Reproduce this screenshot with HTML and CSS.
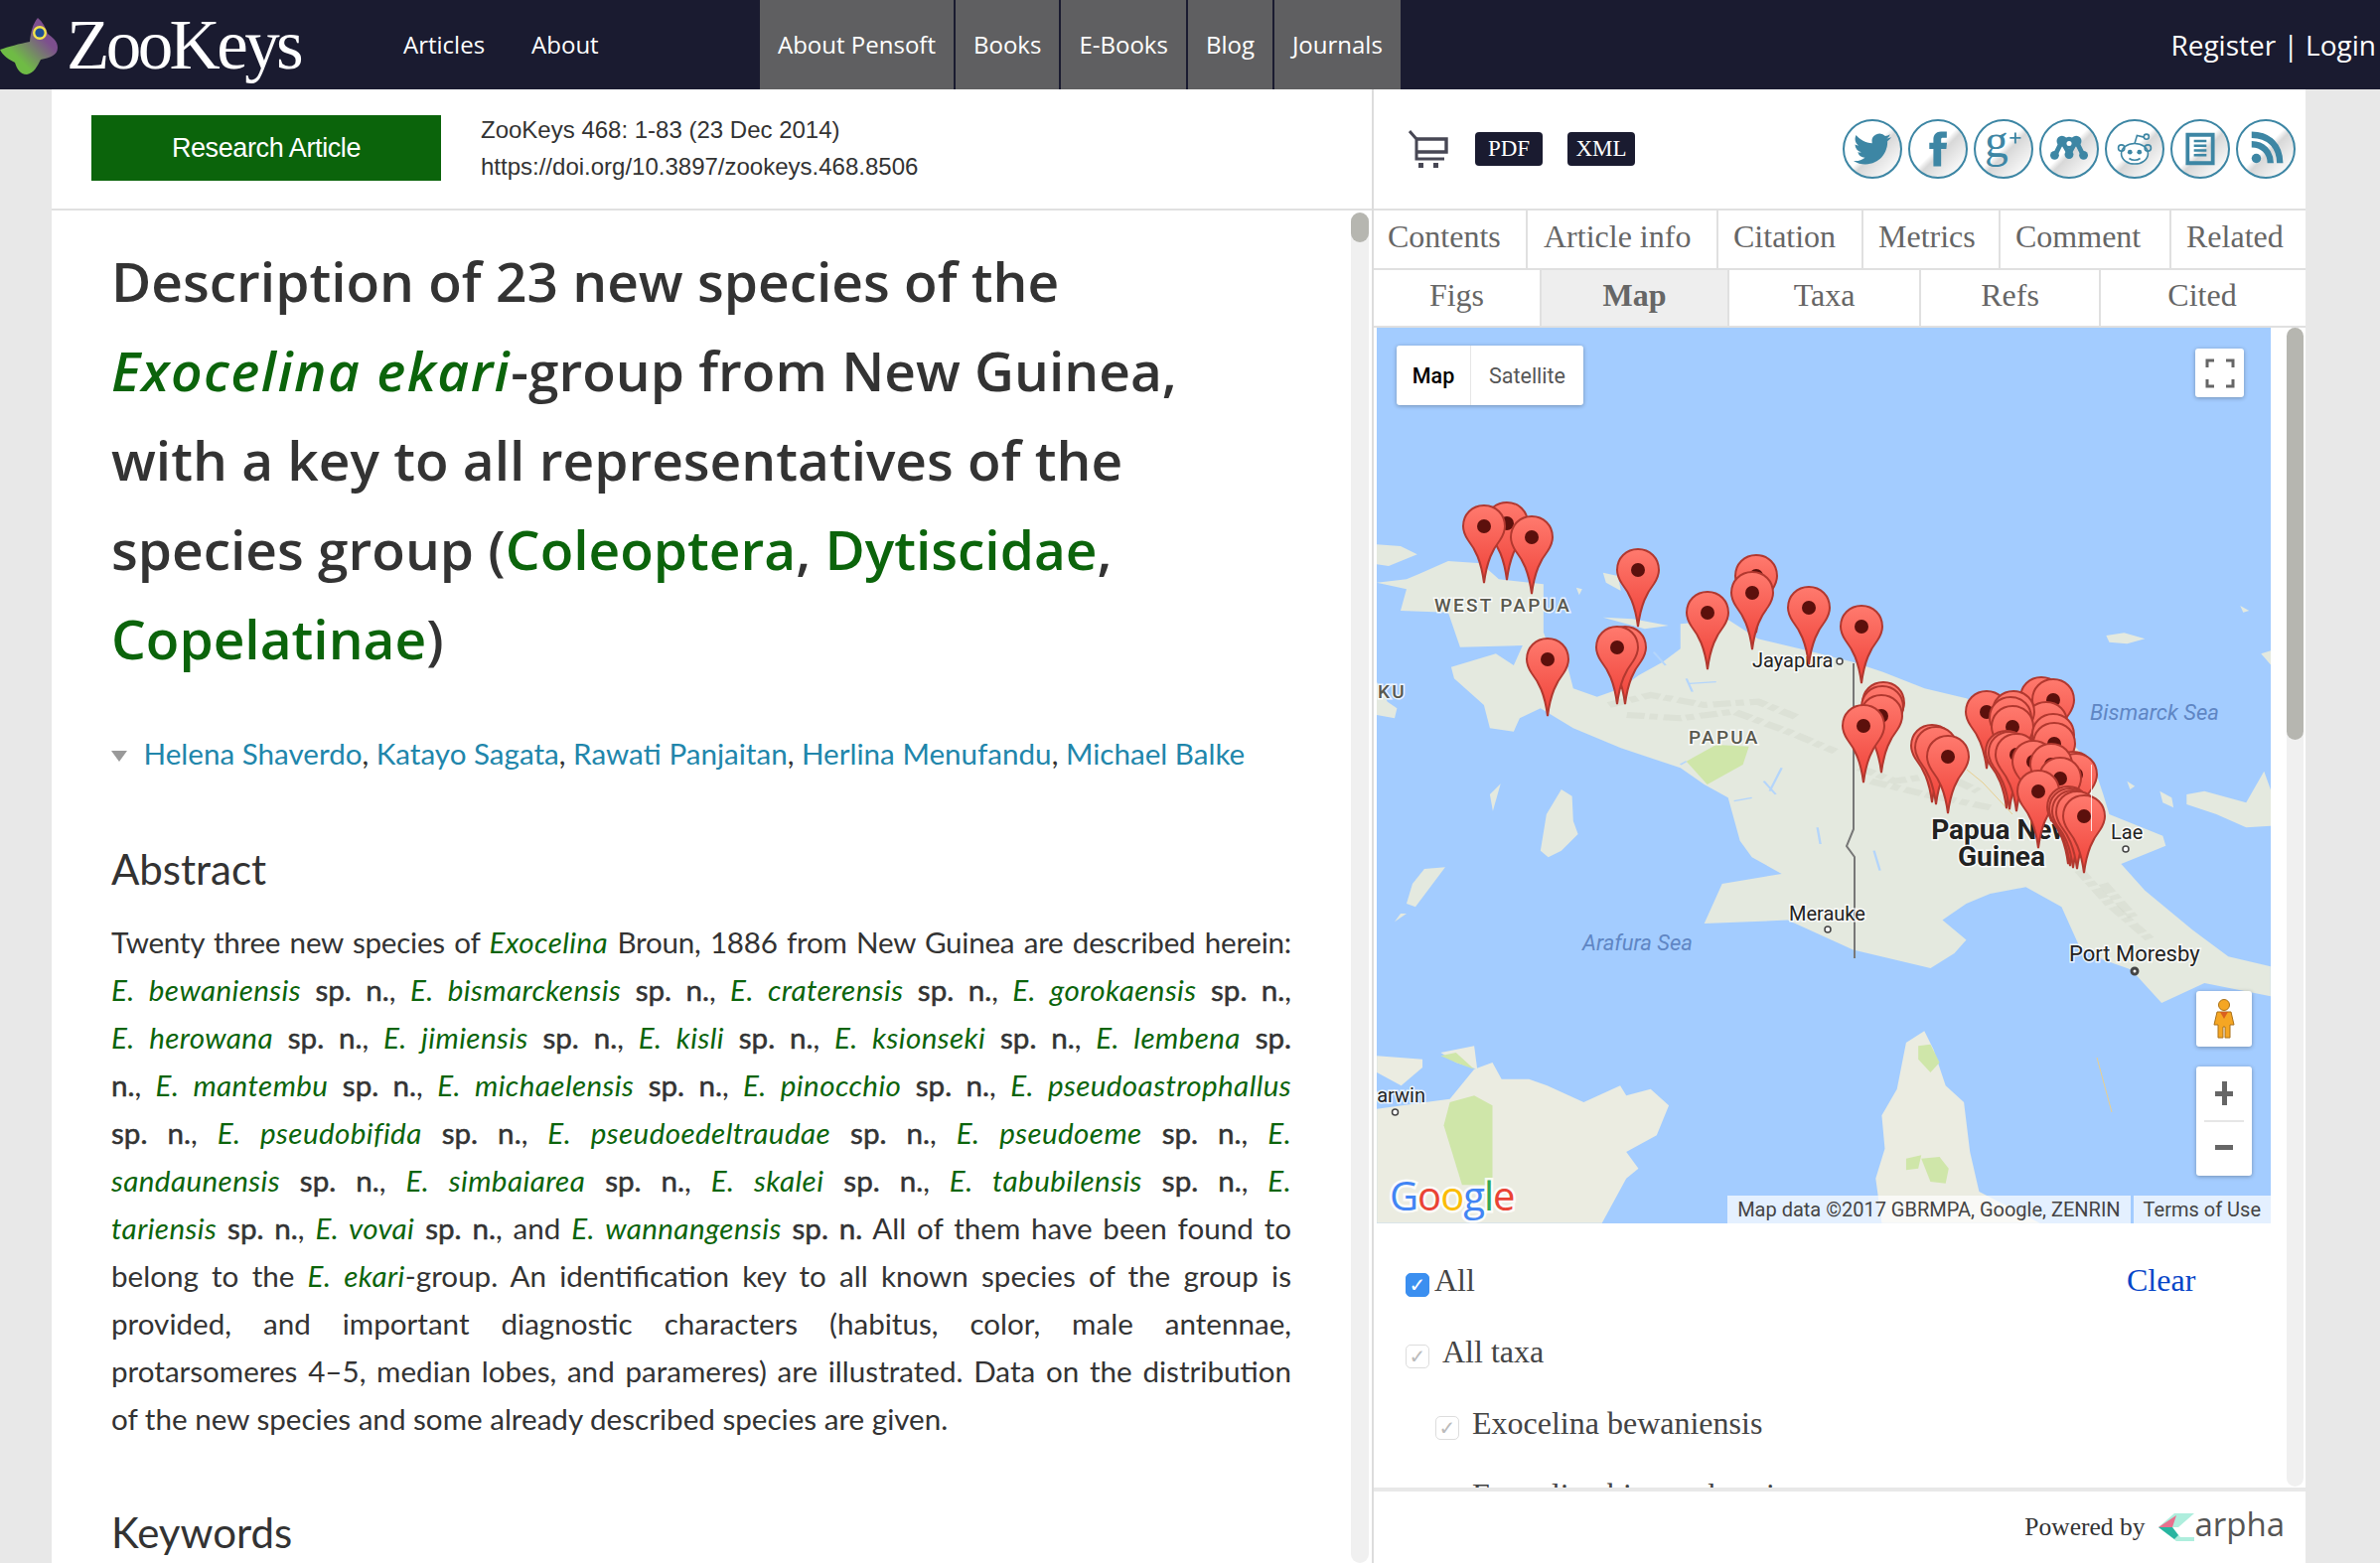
FILE: index.html
```html
<!DOCTYPE html>
<html>
<head>
<meta charset="UTF-8">
<title>ZooKeys - Description of 23 new species of the Exocelina ekari-group</title>
<link rel="stylesheet" href="styles.css">
</head>
<body>

<header class="topbar">
  <a class="logo">
    <svg class="logo-fly" viewBox="0 0 60 80">
      <defs>
        <linearGradient id="flyGrad" x1="0" y1="1" x2="1" y2="0">
          <stop offset="0.3" stop-color="#6fbb45"/>
          <stop offset="0.7" stop-color="#7d4f8e"/>
        </linearGradient>
      </defs>
      <path fill="url(#flyGrad)" d="M38 18C33 24 31 32 30 42C20 44 8 47 0 50C3 56 9 60 15 63C17 69 20 75 27 75C34 74 38 66 41 60C50 58 58 56 58 48C58 41 52 37 48 34C46 28 43 22 38 18Z"/>
      <circle cx="40" cy="33" r="7" fill="#f3e44a"/>
      <circle cx="40" cy="33" r="4.6" fill="#1f4f96"/>
    </svg>
    <span class="logo-text">ZooKeys</span>
  </a>
  <nav class="main-nav">
    <a>Articles</a>
    <a>About</a>
  </nav>
  <nav class="grey-nav">
    <a>About Pensoft</a>
    <a>Books</a>
    <a>E-Books</a>
    <a>Blog</a>
    <a>Journals</a>
  </nav>
  <div class="account"><a>Register</a> <span class="bar">|</span> <a>Login</a></div>
</header>

<main class="page">

  <section class="col-left">
    <div class="art-head">
      <div class="art-type">Research Article</div>
      <div class="art-meta">
        <div>ZooKeys 468: 1-83 (23 Dec 2014)</div>
        <div>https://doi.org/10.3897/zookeys.468.8506</div>
      </div>
    </div>
    <div class="art-scroll">
      <article class="art-text">
        <h1 class="title">Description of 23 new species of the<br>
          <a class="g"><em>Exocelina ekari</em></a>-group from New Guinea,<br>
          with a key to all representatives of the<br>
          species group (<a class="g">Coleoptera</a>, <a class="g">Dytiscidae</a>,<br>
          <a class="g">Copelatinae</a>)</h1>
        <div class="authors">
          <span class="tri"></span>
          <a>Helena Shaverdo</a>, <a>Katayo Sagata</a>, <a>Rawati Panjaitan</a>, <a>Herlina Menufandu</a>, <a>Michael Balke</a>
        </div>
        <h2 class="sub">Abstract</h2>
        <p class="abstract">
          <span class="ln ln-first">Twenty three new species of <a class="g"><em>Exocelina</em></a> Broun, 1886 from New Guinea are described herein:</span>
          <span class="ln"><a class="g"><em>E. bewaniensis</em></a> <b>sp. n.</b>, <a class="g"><em>E. bismarckensis</em></a> <b>sp. n.</b>, <a class="g"><em>E. craterensis</em></a> <b>sp. n.</b>, <a class="g"><em>E. gorokaensis</em></a> <b>sp. n.</b>,</span>
          <span class="ln"><a class="g"><em>E. herowana</em></a> <b>sp. n.</b>, <a class="g"><em>E. jimiensis</em></a> <b>sp. n.</b>, <a class="g"><em>E. kisli</em></a> <b>sp. n.</b>, <a class="g"><em>E. ksionseki</em></a> <b>sp. n.</b>, <a class="g"><em>E. lembena</em></a> <b>sp.</b></span>
          <span class="ln"><b>n.</b>, <a class="g"><em>E. mantembu</em></a> <b>sp. n.</b>, <a class="g"><em>E. michaelensis</em></a> <b>sp. n.</b>, <a class="g"><em>E. pinocchio</em></a> <b>sp. n.</b>, <a class="g"><em>E. pseudoastrophallus</em></a></span>
          <span class="ln"><b>sp. n.</b>, <a class="g"><em>E. pseudobifida</em></a> <b>sp. n.</b>, <a class="g"><em>E. pseudoedeltraudae</em></a> <b>sp. n.</b>, <a class="g"><em>E. pseudoeme</em></a> <b>sp. n.</b>, <a class="g"><em>E.</em></a></span>
          <span class="ln"><a class="g"><em>sandaunensis</em></a> <b>sp. n.</b>, <a class="g"><em>E. simbaiarea</em></a> <b>sp. n.</b>, <a class="g"><em>E. skalei</em></a> <b>sp. n.</b>, <a class="g"><em>E. tabubilensis</em></a> <b>sp. n.</b>, <a class="g"><em>E.</em></a></span>
          <span class="ln"><a class="g"><em>tariensis</em></a> <b>sp. n.</b>, <a class="g"><em>E. vovai</em></a> <b>sp. n.</b>, and <a class="g"><em>E. wannangensis</em></a> <b>sp. n.</b> All of them have been found to</span>
          <span class="ln">belong to the <a class="g"><em>E. ekari</em></a>-group. An identification key to all known species of the group is</span>
          <span class="ln">provided, and important diagnostic characters (habitus, color, male antennae,</span>
          <span class="ln">protarsomeres 4–5, median lobes, and parameres) are illustrated. Data on the distribution</span>
          <span class="ln-last">of the new species and some already described species are given.</span>
        </p>
        <h2 class="sub sub-kw">Keywords</h2>
      </article>
      <div class="track track-left"><div class="thumb"></div></div>
    </div>
  </section>

  <section class="col-right">
    <div class="tools">
      <svg class="cart" viewBox="0 0 42 38">
        <path d="M1 1L8 9V29H36" fill="none" stroke="#474754" stroke-width="3"/>
        <path d="M8 9H38V22H8" fill="none" stroke="#474754" stroke-width="3.4"/>
        <rect x="10" y="33" width="5" height="5" fill="#474754"/>
        <rect x="25" y="33" width="5" height="5" fill="#474754"/>
      </svg>
      <a class="dl">PDF</a>
      <a class="dl">XML</a>
      <div class="socials">
        <a class="soc"><svg viewBox="0 0 24 24"><path d="M23.95 4.57a10 10 0 0 1-2.82.77 4.96 4.96 0 0 0 2.16-2.72c-.95.55-2 .96-3.12 1.19a4.92 4.92 0 0 0-8.38 4.48C7.69 8.09 4.07 6.13 1.64 3.16a4.82 4.82 0 0 0-.66 2.47c0 1.71.87 3.21 2.19 4.1a4.9 4.9 0 0 1-2.23-.61v.06a4.92 4.92 0 0 0 3.95 4.83 5 5 0 0 1-2.21.08 4.94 4.94 0 0 0 4.6 3.42A9.87 9.87 0 0 1 0 19.54a14 14 0 0 0 7.56 2.21c9.05 0 14-7.5 14-13.98 0-.21 0-.42-.02-.63a9.94 9.94 0 0 0 2.46-2.55z"/></svg></a>
        <a class="soc"><svg viewBox="0 0 24 24"><path d="M14 8V6c0-.9.6-1.1 1-1.1h2.6V1H14c-4 0-4.9 3-4.9 4.9V8H6.5v4h2.6v11H14V12h3.3l.4-4z"/></svg></a>
        <a class="soc"><svg viewBox="0 0 24 24"><text class="gplus-g" x="0" y="17">g</text><path d="M16 5h7M19.5 1.5v7" stroke="#3d86a4" stroke-width="1.2" fill="none"/></svg></a>
        <a class="soc"><svg viewBox="0 0 24 24"><circle cx="12" cy="8" r="3.8"/><circle cx="7.5" cy="7" r="3.4"/><circle cx="16.5" cy="7" r="3.4"/><circle cx="12" cy="15.5" r="2.8"/><circle cx="2.8" cy="16" r="2.8"/><circle cx="21.2" cy="16" r="2.8"/><path d="M3 16L7.5 7L12 15L16.5 7L21 16" fill="none" stroke="#3d86a4" stroke-width="3"/><circle cx="12" cy="8.5" r="1.6" fill="#fff"/></svg></a>
        <a class="soc"><svg viewBox="0 0 24 24"><g fill="none" stroke="#3d86a4" stroke-width="1"><ellipse cx="12" cy="15" rx="8.5" ry="6.5" fill="#fff"/><circle cx="3.6" cy="11.4" r="2"/><circle cx="20.4" cy="11.4" r="2"/><path d="M12 8.5L13.5 3.5L18 4.5"/><circle cx="19.5" cy="4.2" r="1.6"/><path d="M8.5 18C10.5 19.5 13.5 19.5 15.5 18"/></g><circle cx="9" cy="14" r="1.5"/><circle cx="15" cy="14" r="1.5"/></svg></a>
        <a class="soc"><svg viewBox="0 0 24 24"><path d="M4 3H20V21H4Z" fill="none" stroke="#3d86a4" stroke-width="2.4"/><path d="M8 7H16M8 10H16M8 13H16M8 16H16" stroke="#3d86a4" stroke-width="1.6"/></svg></a>
        <a class="soc"><svg viewBox="0 0 24 24"><circle cx="6" cy="18" r="3"/><path d="M3 9C10 9 15 14 15 21M3 3C14 3 21 10 21 21" fill="none" stroke="#3d86a4" stroke-width="4"/></svg></a>
      </div>
    </div>

    <div class="tabs tabs-one">
      <a>Contents</a><a>Article info</a><a>Citation</a><a>Metrics</a><a>Comment</a><a>Related</a>
    </div>
    <div class="tabs tabs-two">
      <a>Figs</a><a class="on">Map</a><a>Taxa</a><a>Refs</a><a>Cited</a>
    </div>

    <div class="panel">
      <div class="panel-inner">
        <div class="map">
          <svg class="map-canvas" viewBox="0 0 900 902">
            <defs>
              <linearGradient id="pinGrad" x1="0" y1="0" x2="0" y2="1">
                <stop offset="0" stop-color="#ff7a6e"/>
                <stop offset="1" stop-color="#ef4138"/>
              </linearGradient>
              <g id="pin">
                <path d="M0 57C-3 34 -9 23 -16 14C-20 8 -21 4 -21 0C-21 -12 -12 -21 0 -21C12 -21 21 -12 21 0C21 4 20 8 16 14C9 23 3 34 0 57Z" fill="url(#pinGrad)" stroke="#b2382f" stroke-width="2"/>
                <circle r="7" fill="#5c100c"/>
              </g>
            </defs>

            <!-- land, traced in crop coordinates -->
            <g class="land" transform="translate(-6 150) scale(.5995 .3333)">
              <path d="M10 320L60 310L80 295L130 255L185 262L215 310L290 325L290 470L300 520L330 570L340 640L380 665L420 640L450 600L490 560L520 520L520 445L600 432L650 490L720 520L810 560L860 590L930 640L1000 670L1060 720L1120 760L1180 810L1215 880L1230 960L1240 1020L1330 1085L1335 1115L1260 1170L1300 1250L1380 1370L1440 1450L1511 1480L1511 1570L1400 1530L1328 1590L1277 1490L1230 1460L1190 1420L1160 1300L1100 1240L1040 1260L1000 1290L960 1340L1000 1400L980 1440L940 1485L810 1430L700 1340L560 1350L590 1230L690 1200L640 1150L620 1100L600 970L560 930L520 880L420 820L340 760L285 700L250 730L240 770L200 760L190 690L140 610L135 575L210 535L240 570L255 510L150 515L130 410L50 405L60 340Z"/>
              <path d="M10 205L50 210L78 235L30 270L10 265Z"/>
              <path d="M390 290L415 300L420 345L395 320Z"/>
              <path d="M390 425L440 430L500 450L460 460Z"/>
              <path d="M345 335L355 340L350 358Z"/>
              <path d="M1235 480L1265 472L1300 490L1270 505L1240 500Z"/>
              <path d="M1460 390L1475 405L1465 410Z"/>
              <path d="M1495 535L1512 525L1512 570Z"/>
              <path d="M1325 950L1345 970L1348 1000L1330 985Z"/>
              <path d="M1370 960L1400 950L1470 985L1500 890L1512 950L1512 1055L1470 1060L1420 1020L1370 990Z"/>
              <path d="M1270 920L1283 935L1275 945Z"/>
              <path d="M10 620L28 680L44 700L40 730L10 720Z"/>
              <path d="M320 945L338 965L340 1040L348 1080L320 1130L298 1150L285 1130L295 1020Z"/>
              <path d="M90 1185L125 1180L100 1240L75 1300L60 1290L70 1230Z"/>
              <path d="M205 1010L218 928L200 960Z"/>
              <path d="M50 1320L60 1320L40 1345Z"/>
            </g>
            <g class="ridge" transform="translate(-6 150) scale(.5995 .3333)">
              <path d="M400 690L470 660L560 690L650 680L720 730"/>
              <path d="M430 720L520 730L610 710L700 770L780 830"/>
              <path d="M820 880L880 920L960 900L1020 950"/>
              <path d="M840 920L930 960L1040 1000"/>
              <path d="M1190 1190L1240 1290L1310 1400"/>
              <path d="M1230 1230L1280 1330"/>
            </g>
            <g class="river" transform="translate(-6 150) scale(.5995 .3333)">
              <path d="M535 625L580 620M475 530L495 570M540 650L530 610M660 920L680 960M690 880L670 950M750 1060L755 1110M845 1130L855 1190M610 980L640 970M530 860L520 870"/>
            </g>
            <g class="park" transform="translate(-6 150) scale(.5995 .3333)">
              <path d="M530 860L580 810L635 815L625 870L565 930Z"/>
            </g>
            <g class="land-au" transform="translate(-6 630) scale(.6124 .3333)">
              <path d="M10 470L90 450L130 440L170 350L200 330L215 380L260 380L290 400L350 450L410 400L420 430L460 410L490 460L470 550L420 600L440 650L420 680L380 815L10 815Z"/>
              <path d="M10 310L85 320L85 345L50 400L10 360Z"/>
              <path d="M115 300L170 280L175 350L140 330Z"/>
              <path d="M880 270L910 235L925 290L945 400L975 450L985 600L1000 720L1100 815L840 815L830 680L845 590L840 490L865 410Z"/>
            </g>
            <g class="park" transform="translate(-6 630) scale(.6124 .3333)">
              <path d="M130 450L170 430L200 460L200 700L150 700L120 520Z"/>
              <path d="M115 310L140 300L170 350L140 330Z"/>
              <path d="M900 280L920 275L935 330L920 360L900 320Z"/>
              <path d="M880 620L905 610L900 650L880 655Z"/>
              <path d="M905 620L935 615L950 650L945 695L920 690Z"/>
            </g>

            <path class="border" d="M480 338V505L473 522L481 533V635"/>
            <path class="road" d="M594 445L610 458L640 490M725 735L740 790"/>

            <text class="lb-region" x="58" y="286">WEST PAPUA</text>
            <text class="lb-region" x="314" y="419">PAPUA</text>
            <text class="lb-region" x="30" y="373" text-anchor="end">MALUKU</text>
            <text class="lb-city" x="378" y="342">Jayapura</text>
            <circle class="dot" cx="466" cy="336" r="3"/>
            <text class="lb-city" x="415" y="597">Merauke</text>
            <circle class="dot" cx="454" cy="606" r="3"/>
            <text class="lb-city" x="739" y="515">Lae</text>
            <circle class="dot" cx="754" cy="525" r="3"/>
            <text class="lb-city lb-big" x="697" y="638">Port Moresby</text>
            <circle class="dot dot-big" cx="763" cy="648" r="3"/>
            <text class="lb-city" x="49" y="780" text-anchor="end">Darwin</text>
            <circle class="dot" cx="18.5" cy="790" r="3"/>
            <text class="lb-sea" x="718" y="395">Bismarck Sea</text>
            <text class="lb-sea" x="207" y="627">Arafura Sea</text>
            <text class="lb-country" x="629" y="515" text-anchor="middle">Papua New</text>
            <text class="lb-country" x="629" y="542" text-anchor="middle">Guinea</text>

            <!-- markers, back to front -->
            <use href="#pin" x="131" y="197"/><use href="#pin" x="108" y="200"/><use href="#pin" x="156" y="211"/>
            <use href="#pin" x="263" y="244"/><use href="#pin" x="382" y="250"/><use href="#pin" x="378" y="267"/>
            <use href="#pin" x="333" y="287"/><use href="#pin" x="435" y="282"/><use href="#pin" x="488" y="301"/>
            <use href="#pin" x="172" y="334"/><use href="#pin" x="250" y="322"/><use href="#pin" x="242" y="322"/>
            <use href="#pin" x="510" y="378"/><use href="#pin" x="509" y="382"/><use href="#pin" x="508" y="391"/><use href="#pin" x="490" y="401"/>
            <use href="#pin" x="559" y="421"/><use href="#pin" x="563" y="423"/><use href="#pin" x="575" y="432"/>
            <use href="#pin" x="669" y="373"/><use href="#pin" x="681" y="375"/><use href="#pin" x="614" y="387"/>
            <use href="#pin" x="674" y="398"/><use href="#pin" x="641" y="387"/><use href="#pin" x="638" y="393"/><use href="#pin" x="640" y="402"/><use href="#pin" x="681" y="410"/>
            <use href="#pin" x="682" y="419"/><use href="#pin" x="634" y="427"/><use href="#pin" x="637" y="428"/><use href="#pin" x="644" y="430"/>
            <use href="#pin" x="701" y="448"/><use href="#pin" x="704" y="450"/><use href="#pin" x="661" y="437"/><use href="#pin" x="679" y="440"/><use href="#pin" x="688" y="454"/>
            <use href="#pin" x="666" y="467"/>
            <use href="#pin" x="696" y="483"/><use href="#pin" x="698" y="485"/><use href="#pin" x="701" y="487"/><use href="#pin" x="705" y="488"/><use href="#pin" x="712" y="492"/>
            <path class="seam" d="M719.5 440V507"/>

            <text class="google" x="13" y="889"><tspan class="g-blue">G</tspan><tspan class="g-red">o</tspan><tspan class="g-yellow">o</tspan><tspan class="g-blue">g</tspan><tspan class="g-green">l</tspan><tspan class="g-red">e</tspan></text>
          </svg>

          <div class="map-type"><a class="on">Map</a><a>Satellite</a></div>
          <a class="map-btn map-full">
            <svg viewBox="0 0 30 30"><path d="M2 9V2H9M21 2H28V9M28 21V28H21M9 28H2V21" fill="none" stroke="#666" stroke-width="3"/></svg>
          </a>
          <a class="map-btn map-peg">
            <svg viewBox="0 0 24 40"><circle cx="12" cy="6" r="5.5" fill="#f5a623" stroke="#a9711a"/><path d="M5 13H19L22 26H18V39H13V28H11V39H6V26H2Z" fill="#f5a623" stroke="#a9711a"/><path d="M8 13H16L12 20Z" fill="#d9601f"/></svg>
          </a>
          <div class="map-btn map-zoom">
            <span class="z-plus"></span>
            <span class="z-line"></span>
            <span class="z-minus"></span>
          </div>
          <div class="map-attr"><span>Map data ©2017 GBRMPA, Google, ZENRIN</span><span>Terms of Use</span></div>
        </div>

        <div class="filter">
          <div class="f-row f-all"><span class="chk chk-on">✓</span><span class="f-label">All</span><a class="clear">Clear</a></div>
          <div class="f-row"><span class="chk">✓</span><span class="f-label f-gap">All taxa</span></div>
          <div class="f-row f-sub"><span class="chk">✓</span><span class="f-label f-gap">Exocelina bewaniensis</span></div>
          <div class="f-row f-sub"><span class="chk">✓</span><span class="f-label f-gap">Exocelina bismarckensis</span></div>
        </div>
      </div>
      <div class="track track-right"><div class="thumb"></div></div>
    </div>

    <div class="powered">
      <span>Powered by</span>
      <svg class="arpha-icon" viewBox="0 0 36 28">
        <path d="M36 0H16L0 14H20Z" fill="#aeeedd"/>
        <path d="M18 2L0 14H14Z" fill="#e8708e"/>
        <path d="M0 14L18 28H36V24H22L14 14Z" fill="#aeeedd"/>
        <path d="M0 14L14 14L20 22L16 26Z" fill="#27b5a0"/>
      </svg>
      <span class="arpha">arpha</span>
    </div>
  </section>
</main>

</body>
</html>
```

FILE: styles.css
```css
html, body {margin: 0; height: 100%;}
body {background: #e8e8e8; color: #333; font-family: "Lato", sans-serif; overflow: hidden; width: 2396px; height: 1574px;}
a {color: inherit; text-decoration: none;}

/* top bar */
.topbar {display: flex; height: 90px; background: #1a1b30; color: #fff; font-family: "Open Sans", sans-serif; font-size: 24px;}
.logo {display: flex; width: 406px; position: relative;}
.logo-fly {width: 60px; height: 80px; flex: none;}
.logo-text {font-family: "Liberation Serif", serif; font-size: 71px; letter-spacing: -3.6px; line-height: 90px; margin-left: 7px;}
.main-nav {display: flex; gap: 47px; width: 359px; line-height: 90px;}
.grey-nav {display: flex; gap: 2px; line-height: 90px;}
.grey-nav a {background: #5f5f61; padding: 0 18px;}
.account {margin-left: auto; padding-right: 4px; font-size: 28px; line-height: 90px;}

/* main frame */
.page {display: flex; width: 2269px; height: 1484px; margin-left: 52px; background: #fff;}
.col-left {display: flex; flex-direction: column; width: 1329px; flex: none;}
.col-right {display: flex; flex-direction: column; width: 940px; flex: none; border-left: 2px solid #dcdcdc; box-sizing: border-box;}

/* article head */
.art-head {display: flex; height: 122px; box-sizing: border-box; padding: 26px 0 0 40px; border-bottom: 2px solid #e0e0e0; flex: none;}
.art-type {width: 352px; height: 66px; background: #0b640b; color: #fff; font-family: "Liberation Sans", sans-serif; font-size: 27px; letter-spacing: -.4px; text-align: center; line-height: 66px;}
.art-meta {margin-left: 40px; font-family: "Liberation Sans", sans-serif; font-size: 24px; line-height: 36.5px; margin-top: -3px;}

/* article text */
.art-scroll {display: flex; flex: 1; min-height: 0;}
.art-text {width: 1188px; margin-left: 60px; flex: none; overflow: hidden;}
.title {margin: 0; padding-top: 26px; font-family: "Open Sans", sans-serif; font-size: 55px; font-weight: 600; line-height: 90px; color: #333;}
.title em {letter-spacing: 1.5px;}
.g {color: #0b640b;}
.authors {margin-top: 50px; font-size: 29.6px; line-height: 42px; color: #333;}
.authors a {color: #2186ab;}
.tri {display: inline-block; width: 0; height: 0; margin-right: 9px; border-left: 8px solid transparent; border-right: 8px solid transparent; border-top: 11px solid #999; vertical-align: 3px;}
.sub {margin: 0; font-size: 42px; font-weight: 400; color: #333; line-height: 60px;}
.authors + .sub {margin-top: 65px;}
.abstract {margin: 20px 0 0; font-size: 29.6px; line-height: 48px;}
.abstract b {font-weight: 400; -webkit-text-stroke: .5px #333;}
.abstract em {letter-spacing: .4px;}
.ln {display: block; text-align: justify; text-align-last: justify;}
.ln-first {letter-spacing: -.25px;}
.ln-last {display: block;}
.sub-kw {margin-top: 60px;}

/* scrollbars */
.track {background: #f0f0f0; border-radius: 10px; flex: none;}
.thumb {background: #b6b6b0; border-radius: 10px;}
.track-left {width: 18px; margin: 2px 0 0 60px;}
.track-left .thumb {height: 30px;}
.track-right {width: 17px; margin-left: 16px; height: 1167px;}
.track-right .thumb {height: 415px;}

/* right column */
.tools {display: flex; align-items: center; height: 122px; box-sizing: border-box; padding: 0 10px 0 35px; border-bottom: 2px solid #e0e0e0; flex: none;}
.cart {width: 42px; height: 38px;}
.dl {width: 68px; height: 34px; margin-left: 25px; background: #1a1b30; color: #fff; border-radius: 4px; font-family: "Liberation Serif", serif; font-size: 23px; text-align: center; line-height: 34px;}
.socials {display: flex; gap: 6px; margin-left: auto;}
.soc {display: flex; align-items: center; justify-content: center; width: 60px; height: 60px; box-sizing: border-box; border: 2px solid #3d86a4; border-radius: 50%; background: linear-gradient(135deg, #fff 48%, #d8d8d8 56%, #fff 92%);}
.soc svg {width: 38px; height: 38px; fill: #3d86a4;}
.gplus-g {font-family: "Liberation Serif", serif; font-size: 30px;}

.tabs {display: flex; flex: none; box-sizing: border-box; font-family: "Liberation Serif", serif; font-size: 32px; color: #666; border-bottom: 2px solid #e0e0e0;}
.tabs a {box-sizing: border-box; border-right: 2px solid #e0e0e0;}
.tabs a:last-child {border-right: 0;}
.tabs-one {height: 60px; line-height: 53px;}
.tabs-one a {padding-left: 15px;}
.tabs-one a:nth-child(1) {width: 155px; padding-left: 14px;}
.tabs-one a:nth-child(2) {width: 192px; padding-left: 16px;}
.tabs-one a:nth-child(3) {width: 146px;}
.tabs-one a:nth-child(4) {width: 138px;}
.tabs-one a:nth-child(5) {width: 172px;}
.tabs-one a:nth-child(6) {width: 135px;}
.tabs-two {height: 58px; line-height: 50px; text-align: center;}
.tabs-two a:nth-child(1) {width: 169px;}
.tabs-two a:nth-child(2) {width: 189px;}
.tabs-two a:nth-child(3) {width: 193px;}
.tabs-two a:nth-child(4) {width: 181px;}
.tabs-two a:nth-child(5) {width: 204px;}
.tabs-two .on {background: #eee; font-weight: 700;}

.panel {display: flex; height: 1168px; flex: none; padding-left: 3px; overflow: hidden; border-bottom: 4px solid #e8e8e8; box-sizing: content-box;}
.panel-inner {width: 900px; flex: none;}

/* map */
.map {position: relative; width: 900px; height: 902px; background: #a3ccff; overflow: hidden; font-family: "Roboto", sans-serif;}
.map-canvas {display: block; width: 900px; height: 902px;}
.land path {fill: #e4e9df;}
.land-au path {fill: #ebece1;}
.park path {fill: #cfe6a9;}
.ridge path {fill: none; stroke: #cfd4c9; stroke-width: 18; stroke-dasharray: 30 8 14 10; opacity: .4;}
.river path {fill: none; stroke: #b4d5fb; stroke-width: 4;}
.border {fill: none; stroke: #777; stroke-width: 2;}
.road {fill: none; stroke: #e9cf8f; stroke-width: 1;}
.seam {stroke: #fff; stroke-width: 1; opacity: .8;}
.map-canvas text {font-family: "Roboto", sans-serif; paint-order: stroke; stroke: rgba(255,255,255,.8); stroke-width: 3px;}
.lb-region {font-size: 19px; font-weight: 500; letter-spacing: 2.3px; fill: #59594f;}
.lb-city {font-size: 20px; fill: #222;}
.lb-big {font-size: 22px;}
.map-canvas .lb-sea {font-size: 22px; font-style: italic; fill: #5f86c4; stroke: none;}
.lb-country {font-size: 28px; font-weight: 700; fill: #222;}
.dot {fill: #fff; stroke: #444; stroke-width: 1.5;}
.dot-big {stroke-width: 3;}
.map-canvas .google {font-family: "Open Sans", sans-serif; font-size: 40px; stroke-width: 5px; stroke: rgba(255,255,255,.85); letter-spacing: -1px;}
.g-blue {fill: #4285f4;}
.g-red {fill: #ea4335;}
.g-yellow {fill: #fbbc05;}
.g-green {fill: #34a853;}

.map-type {position: absolute; left: 20px; top: 18px; display: flex; height: 60px; width: 188px; background: #fff; border-radius: 3px; box-shadow: 0 1px 4px rgba(0,0,0,.3); font-size: 21.5px; line-height: 62px; color: #565656;}
.map-type a {flex: 1; text-align: center;}
.map-type .on {flex: none; width: 74px; color: #000; font-weight: 500; border-right: 1px solid #e6e6e6;}
.map-btn {position: absolute; display: flex; align-items: center; justify-content: center; background: #fff; border-radius: 3px; box-shadow: 0 1px 4px rgba(0,0,0,.3);}
.map-full {right: 27px; top: 21px; width: 49px; height: 49px;}
.map-full svg {width: 30px; height: 30px;}
.map-peg {right: 19px; top: 668px; width: 56px; height: 56px;}
.map-peg svg {width: 24px; height: 40px;}
.map-zoom {right: 19px; top: 744px; width: 56px; height: 110px; display: block;}
.z-plus {position: absolute; left: 19px; top: 15px; width: 18px; height: 24px; background: linear-gradient(#666,#666) center / 18px 5px no-repeat, linear-gradient(#666,#666) center / 5px 24px no-repeat;}
.z-line {position: absolute; left: 8px; right: 8px; top: 54px; height: 2px; background: #e6e6e6;}
.z-minus {position: absolute; left: 19px; top: 79px; width: 18px; height: 5px; background: #666;}
.map-attr {position: absolute; right: 0; bottom: 0; display: flex; gap: 3px; height: 28px; line-height: 28px; font-size: 20px; color: #444;}
.map-attr span {background: rgba(255,255,255,.7); padding: 0 10px;}

/* taxon filter */
.filter {padding: 21px 0 0 29px; font-family: "Liberation Serif", serif; font-size: 32px; color: #444;}
.f-row {display: flex; align-items: center; height: 72px; position: relative;}
.f-sub {padding-left: 30px;}
.chk {display: block; width: 24px; height: 24px; box-sizing: border-box; border: 1px solid #ddd; border-radius: 5px; color: #bbb; font-family: "DejaVu Sans", sans-serif; font-size: 20px; line-height: 22px; text-align: center; margin-top: 10px; flex: none;}
.chk-on {background: #3b8ff0; border-color: #3b8ff0; color: #fff;}
.f-label {margin-left: 5px;}
.f-gap {margin-left: 13px;}
.clear {position: absolute; left: 726px; color: #0645c8;}

/* footer of the panel */
.powered {display: flex; align-items: center; justify-content: flex-end; flex: 1; padding-right: 21px; font-family: "Liberation Serif", serif; font-size: 25.5px; color: #333;}
.arpha-icon {width: 36px; height: 28px; margin-left: 14px;}
.arpha {font-family: "Open Sans", sans-serif; font-size: 33px; color: #555; line-height: 1; margin-top: -8px;}
```
